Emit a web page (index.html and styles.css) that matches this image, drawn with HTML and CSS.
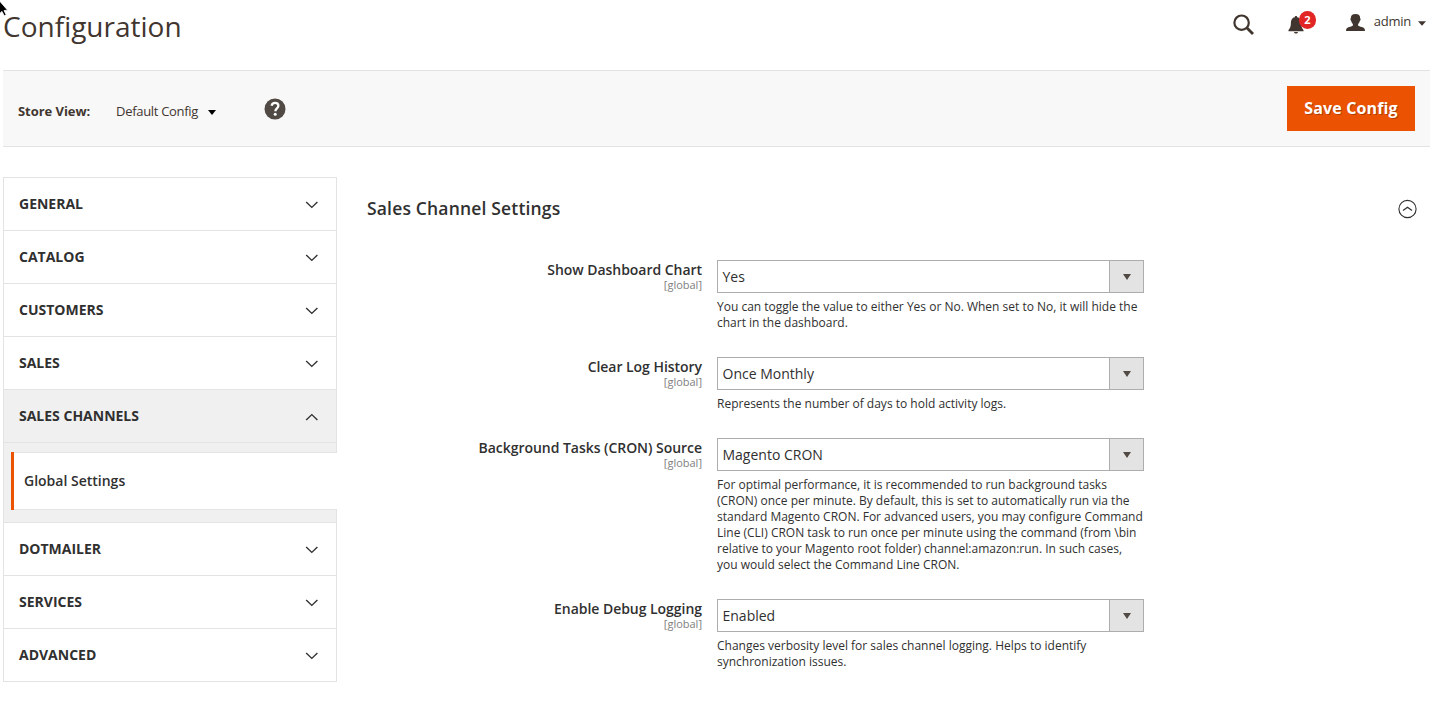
FILE: index.html
```html
<!DOCTYPE html>
<html lang="en">
<head>
<meta charset="utf-8">
<title>Configuration</title>
<link rel="stylesheet" href="styles.css">
</head>
<body>
<svg class="cursor" width="9" height="18" viewBox="0 0 9 18"><path d="M-3-2 7.6 10.2 4 10.5 6.2 14.8 4.2 15.8 2 11.4-2 15z" fill="#000" stroke="#fff" stroke-width=".8"/></svg>
<header class="header">
  <h1 class="title">Configuration</h1>
  <div class="tools">
    <svg class="search" width="22" height="22" viewBox="0 0 22 22" fill="none" stroke="#41362f"><circle cx="8.6" cy="8.7" r="7.2" stroke-width="2.2"/><path d="M13.8 13.7 20 20" stroke-width="2.8"/></svg>
    <div class="notices">
      <svg width="16" height="18" viewBox="0 0 16 18" fill="#41362f"><path d="M8 0C7.200 0 6.800.6 6.800 1.200 3.700 1.900 3 4.300 2.900 7 2.800 10.200 2.300 12 .5 14v1.300h15V14c-1.800-2-2.300-3.800-2.400-7-.1-2.700-.8-5.100-3.900-5.800C9.200.6 8.800 0 8 0zM6 15.900h4c-.3 1-1 1.500-2 1.500s-1.700-.5-2-1.500z"/></svg>
      <span class="badge">2</span>
    </div>
    <div class="account">
      <svg width="19" height="17" viewBox="0 0 19 17" fill="#41362f"><path d="M9.500 0C6.400 0 4.700 1.600 4.800 4.200c0 .5-.5.600-.4 1.400.1.900.5 1 .8 1.300.3 1.500 1 2.300 1.700 3v1.300c-.4 1-2 1.300-3.700 1.800C1.200 13.700 0 14.300 0 17h19c0-2.700-1.200-3.300-3.200-4-1.700-.5-3.300-.8-3.700-1.800V9.900c.7-.7 1.400-1.500 1.700-3 .3-.3.700-.4.800-1.300.1-.8-.4-.9-.4-1.400C14.300 1.600 12.600 0 9.500 0z"/></svg>
      <span class="name">admin</span>
      <svg width="8" height="5" viewBox="0 0 8 5"><path d="M0 .2h8L4 4.800z" fill="#41362f"/></svg>
    </div>
  </div>
</header>
<div class="actions">
  <span class="scope-label">Store View:</span>
  <span class="scope">Default Config</span>
  <svg class="scope-caret" width="8" height="5" viewBox="0 0 8 5"><path d="M0 0h8L4 5z"/></svg>
  <svg class="help" width="22" height="22" viewBox="0 0 22 22"><circle cx="11" cy="11" r="10.500" fill="#514943"/><path d="M7.600 7.700C8 5.700 9.400 4.900 11.100 4.900c2 0 3.300 1.100 3.300 2.900 0 2.600-3 2.600-3 5.400" fill="none" stroke="#fff" stroke-width="2.300"/><circle cx="11.200" cy="16.200" r="1.500" fill="#fff"/></svg>
  <button class="save">Save Config</button>
</div>
<div class="page">
  <nav class="nav">
    <div class="tab">GENERAL<svg class="chev" viewBox="0 0 14 8"><path d="M1.200 1l5.600 5.400L12.400 1"/></svg></div>
    <div class="tab">CATALOG<svg class="chev" viewBox="0 0 14 8"><path d="M1.200 1l5.600 5.400L12.400 1"/></svg></div>
    <div class="tab">CUSTOMERS<svg class="chev" viewBox="0 0 14 8"><path d="M1.200 1l5.600 5.400L12.400 1"/></svg></div>
    <div class="tab">SALES<svg class="chev" viewBox="0 0 14 8"><path d="M1.200 1l5.600 5.400L12.400 1"/></svg></div>
    <div class="tab open">SALES CHANNELS<svg class="chev" viewBox="0 0 14 8"><path d="M1.200 7l5.600-5.400L12.400 7"/></svg></div>
    <div class="sub"><div class="current">Global Settings</div></div>
    <div class="tab">DOTMAILER<svg class="chev" viewBox="0 0 14 8"><path d="M1.200 1l5.600 5.400L12.400 1"/></svg></div>
    <div class="tab">SERVICES<svg class="chev" viewBox="0 0 14 8"><path d="M1.200 1l5.600 5.400L12.400 1"/></svg></div>
    <div class="tab">ADVANCED<svg class="chev" viewBox="0 0 14 8"><path d="M1.200 1l5.600 5.400L12.400 1"/></svg></div>
  </nav>
  <main class="main">
    <div class="section-head">
      <h2 class="section-title">Sales Channel Settings</h2>
      <svg width="20" height="20" viewBox="0 0 20 20" fill="none" stroke="#303030" stroke-width="1.100"><circle cx="10.500" cy="10" r="8.600"/><path d="M6 11.600 10.500 8.200l4.500 3.400" stroke-width="1.200"/></svg>
    </div>
    <div class="field">
      <div class="label">Show Dashboard Chart<span class="level">[global]</span></div>
      <div class="control">
        <div class="select"><span class="value">Yes</span><span class="arrow"></span></div>
        <p class="note">You can toggle the value to either Yes or No. When set to No, it will hide the<br>chart in the dashboard.</p>
      </div>
    </div>
    <div class="field">
      <div class="label">Clear Log History<span class="level">[global]</span></div>
      <div class="control">
        <div class="select"><span class="value">Once Monthly</span><span class="arrow"></span></div>
        <p class="note">Represents the number of days to hold activity logs.</p>
      </div>
    </div>
    <div class="field">
      <div class="label">Background Tasks (CRON) Source<span class="level">[global]</span></div>
      <div class="control">
        <div class="select"><span class="value">Magento CRON</span><span class="arrow"></span></div>
        <p class="note">For optimal performance, it is recommended to run background tasks<br>(CRON) once per minute. By default, this is set to automatically run via the<br>standard Magento CRON. For advanced users, you may configure Command<br>Line (CLI) CRON task to run once per minute using the command (from \bin<br>relative to your Magento root folder) channel:amazon:run. In such cases,<br>you would select the Command Line CRON.</p>
      </div>
    </div>
    <div class="field">
      <div class="label">Enable Debug Logging<span class="level">[global]</span></div>
      <div class="control">
        <div class="select"><span class="value">Enabled</span><span class="arrow"></span></div>
        <p class="note">Changes verbosity level for sales channel logging. Helps to identify<br>synchronization issues.</p>
      </div>
    </div>
  </main>
</div>
</body>
</html>
```
FILE: styles.css
```css
* { box-sizing: border-box; }
body {
  margin: 0;
  height: 701px;
  overflow: hidden;
  background: #fff;
  color: #303030;
  font: 14px/20px "Open Sans", "Noto Sans", sans-serif;
}
svg { display: block; flex: none; }
.cursor { position: absolute; left: 0; top: 0; }
.header {
  display: flex;
  justify-content: space-between;
  height: 70px;
  padding: 6px 10px 0 3px;
}
.title {
  margin: 0;
  color: #41362f;
  font-size: 28px;
  font-weight: 400;
  line-height: 40px;
}
.tools { display: flex; align-items: flex-start; }
.search { margin: 8px 33px 0 0; }
.notices { position: relative; margin: 10px 42px 0 0; }
.badge {
  position: absolute;
  left: 11px;
  top: -5px;
  width: 17px;
  height: 18px;
  border-radius: 9px;
  background: #e22626;
  color: #fff;
  font-size: 11px;
  font-weight: 700;
  line-height: 18px;
  text-align: center;
}
.account { display: flex; align-items: center; margin-top: 5px; }
.account .name {
  margin: 0 7px 0 9px;
  color: #41362f;
  font-size: 13px;
  letter-spacing: -.25px;
}
.account svg:first-child { margin-top: 3px; }
.account svg:last-child { margin-top: 5px; }
.actions {
  display: flex;
  align-items: center;
  height: 77px;
  margin: 0 6px 0 3px;
  padding: 0 15px;
  border-top: 1px solid #e3e3e3;
  border-bottom: 1px solid #e3e3e3;
  background: #f8f8f8;
  color: #41362f;
  font-size: 13px;
}
.scope-label { width: 98px; padding-top: 5px; font-weight: 700; letter-spacing: -.05px; }
.scope { width: 92px; padding-top: 5px; white-space: nowrap; letter-spacing: -.3px; }
.scope-caret { margin-top: 7px; }
.help { margin-left: 48px; margin-top: 1px; }
.save {
  width: 128px;
  height: 45px;
  margin-left: auto;
  padding: 0;
  border: 0;
  background: #eb5202;
  color: #fff;
  font: 700 16px/45px "Open Sans", sans-serif;
  letter-spacing: .15px;
  text-shadow: 1px 1px 0 rgba(0, 0, 0, .25);
}
.page { display: flex; padding: 30px 6px 0 3px; }
.nav {
  flex: none;
  width: 334px;
  border-top: 1px solid #e3e3e3;
}
.tab {
  display: flex;
  align-items: center;
  justify-content: space-between;
  height: 53px;
  padding: 0 17px 0 15px;
  border: 1px solid #e3e3e3;
  border-top: 0;
  font-weight: 700;
}
.open { background: #f0f0f0; }
.chev {
  width: 14px;
  height: 8px;
  margin-top: 1px;
  fill: none;
  stroke: #303030;
  stroke-width: 1.400;
}
.sub {
  height: 80px;
  padding: 9px 0 0 7px;
  border: 1px solid #e3e3e3;
  border-top: 0;
  background: #f0f0f0;
}
.current {
  height: 58px;
  margin-right: -1px;
  padding-left: 10px;
  border-left: 3px solid #eb5202;
  background: #fff;
  box-shadow: inset 0 1px #e3e3e3, inset 0 -1px #e3e3e3;
  font-weight: 600;
  line-height: 58px;
}
.main { flex: 1; margin-left: 30px; }
.section-head {
  display: flex;
  align-items: center;
  justify-content: space-between;
  height: 83px;
  padding: 0 13px 20px 0;
}
.section-title {
  margin: -2px 0 0;
  font-size: 17.500px;
  font-weight: 600;
  letter-spacing: .17px;
}
.field { display: flex; gap: 15px; margin-bottom: 26px; }
.label {
  width: 335px;
  font-weight: 600;
  letter-spacing: -.04px;
  text-align: right;
}
.level {
  display: block;
  margin-top: -2px;
  color: #808080;
  font-size: 11px;
  font-weight: 400;
  letter-spacing: 0;
  line-height: 14px;
}
.control { width: 427px; }
.select {
  display: flex;
  height: 33px;
  border: 1px solid #adadad;
}
.value { flex: 1; padding-left: 4.500px; line-height: 32px; }
.arrow {
  display: grid;
  place-items: center;
  width: 34px;
  border-left: 1px solid #adadad;
  background: #e3e3e3;
}
.arrow::after {
  content: "";
  border: solid transparent;
  border-width: 6px 4px 0;
  border-top-color: #514943;
}
.note {
  margin: 6px 0 0;
  font-size: 12px;
  line-height: 16px;
  white-space: nowrap;
}
```
